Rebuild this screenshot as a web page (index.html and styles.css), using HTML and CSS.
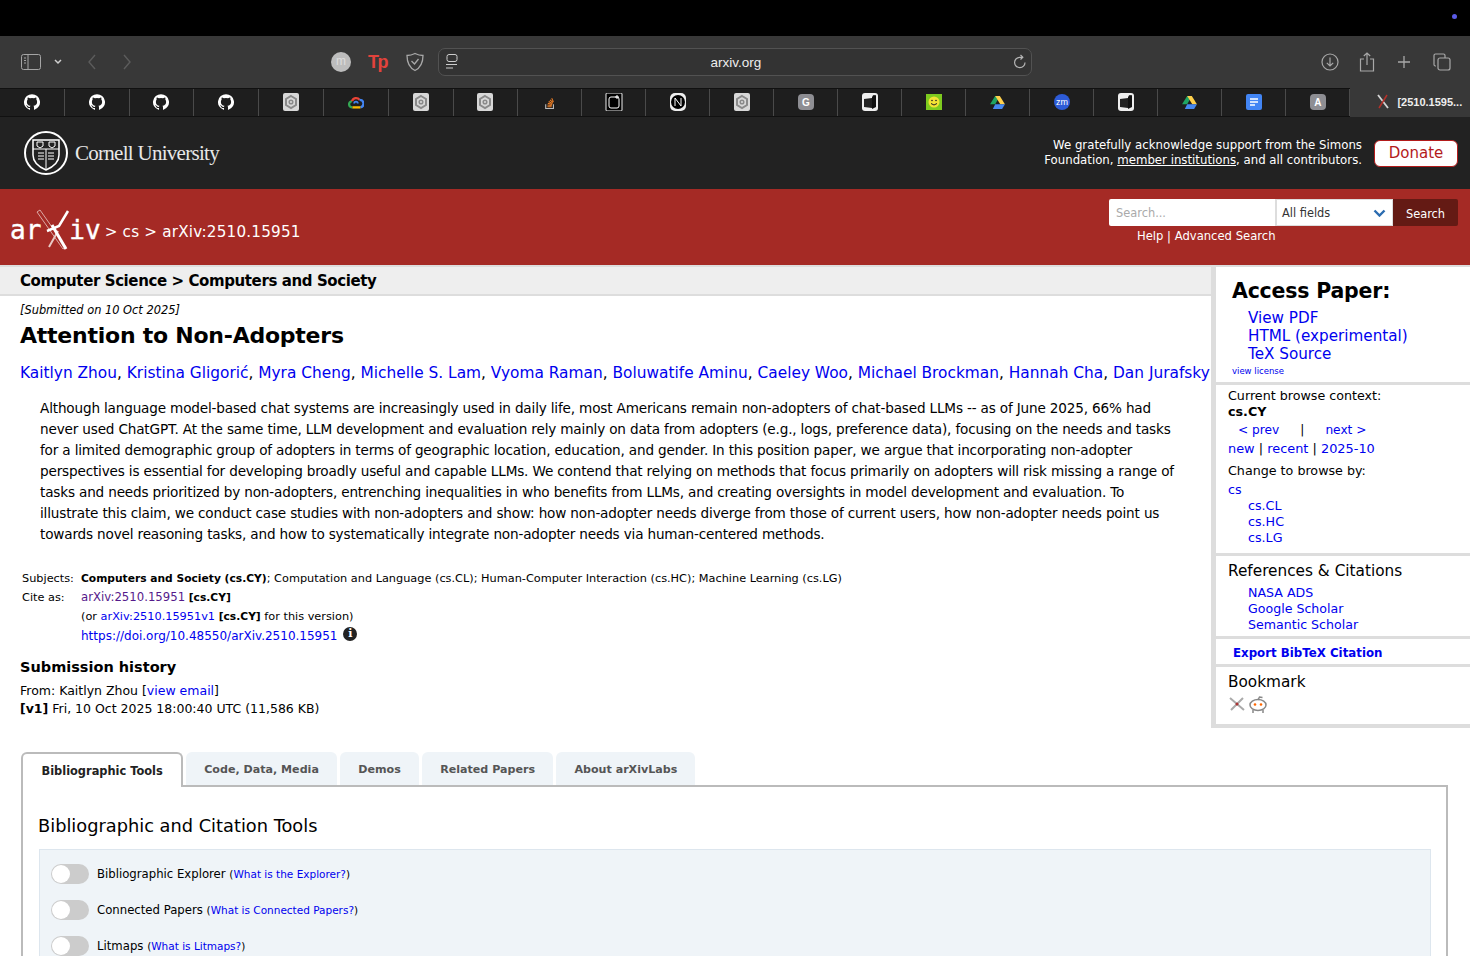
FILE: index.html

```html
<!DOCTYPE html>
<html lang="en">
<head>
  <meta charset="UTF-8" />
  <title>[2510.15951] Attention to Non-Adopters</title>
  <link rel="stylesheet" href="styles.css">
</head>
<body>
  <svg class="defs" width="0" height="0" aria-hidden="true">
    <symbol id="gh" viewBox="0 0 16 16"><path fill="#fff" d="M8 .2a8 8 0 0 0-2.500 15.600c.4.100.5-.2.5-.4v-1.400c-2.200.5-2.700-1-2.700-1-.4-.9-.9-1.200-.9-1.200-.7-.5.100-.5.100-.5.800.100 1.200.8 1.200.8.700 1.200 1.900.9 2.300.7.100-.5.300-.9.500-1.100-1.800-.2-3.600-.9-3.600-4 0-.9.300-1.600.8-2.100-.1-.2-.4-1 .1-2.100 0 0 .7-.2 2.200.8a7.500 7.500 0 0 1 4 0c1.500-1 2.200-.8 2.200-.8.400 1.100.2 1.900.1 2.100.5.600.8 1.300.8 2.100 0 3.100-1.900 3.800-3.700 4 .3.300.6.800.6 1.500v2.200c0 .2.100.5.500.4A8 8 0 0 0 8 .2z"/></symbol>
    <symbol id="hex" viewBox="0 0 18 18"><rect x="1" y="0" width="16" height="18" rx="2" fill="#d8d8d8"/><path d="M9 3l5 3v6l-5 3-5-3V6z" fill="none" stroke="#8a8a8a" stroke-width="2"/><circle cx="9" cy="9" r="1.800" fill="none" stroke="#8a8a8a" stroke-width="1.500"/></symbol>
    <symbol id="cloud" viewBox="0 0 18 14"><path d="M5 12.500a3.500 3.500 0 0 1-.5-7" fill="none" stroke="#34a853" stroke-width="2.600"/><path d="M4.500 5.500A4.800 4.800 0 0 1 13 4" fill="none" stroke="#ea4335" stroke-width="2.600"/><path d="M13 4a4.300 4.300 0 0 1 1 8.500" fill="none" stroke="#4285f4" stroke-width="2.600"/><path d="M5 12.500h9" stroke="#fbbc05" stroke-width="2.600"/><path d="M7 8a2 2 0 0 1 4 0" fill="none" stroke="#4285f4" stroke-width="2"/></symbol>
    <symbol id="so" viewBox="0 0 14 16"><path d="M2 10v5h9v-5" fill="none" stroke="#bcbbbb" stroke-width="1.300"/><path d="M4 13h5M4 11l5 .6M4.500 9l5 1.300M5.500 6.800l4.400 2.500M7 4.800l3.500 3.400M9 3l2 4.300" stroke="#f48024" stroke-width="1.200"/></symbol>
    <symbol id="box" viewBox="0 0 18 18"><rect x="1" y="0" width="16" height="18" rx="1" fill="#000" stroke="#eee"/><rect x="4" y="4" width="10" height="11" rx="2" fill="none" stroke="#fff"/><path d="M12 2v4M10 4h4" stroke="#fff"/></symbol>
    <symbol id="notion" viewBox="0 0 18 18"><rect x="1" y="0" width="16" height="18" rx="5" fill="#eee"/><circle cx="9" cy="9" r="7" fill="#000"/><path d="M6 13V5l6 8V5" fill="none" stroke="#fff"/></symbol>
    <symbol id="book" viewBox="0 0 18 18"><rect x="1" y="0" width="16" height="18" rx="3" fill="#eee"/><path d="M3 6l8-1v10l-8-1z" fill="#222"/><path d="M11 4l4-2v12l-4 2z" fill="#111"/><circle cx="13" cy="3.500" r="1.500" fill="#111"/></symbol>
    <symbol id="smile" viewBox="0 0 16 16"><rect width="16" height="16" fill="#7ecb1f"/><circle cx="8" cy="8" r="5.500" fill="#f2e335"/><circle cx="6" cy="6.500" r=".8" fill="#222"/><circle cx="10" cy="6.500" r=".8" fill="#222"/><path d="M5 9.500q3 3 6 0" fill="none" stroke="#222"/></symbol>
    <symbol id="drive" viewBox="0 0 16 14"><path d="M5.500 0h5l-5 9H0z" fill="#1fa463"/><path d="M5.500 0h5L16 9h-5z" fill="#ffd04b"/><path d="M3 14l2.500-5H16l-3 5z" fill="#4688f1"/></symbol>
    <symbol id="doc" viewBox="0 0 16 16"><rect width="16" height="16" rx="2" fill="#4285f4"/><path d="M4 5h8M4 8h8M4 11h5" stroke="#fff" stroke-width="1.500"/></symbol>
  </svg>

  <div class="mac-bar"><span class="mac-dot"></span></div>

  <div class="toolbar">
    <svg class="tb-sidebar" width="20" height="16" viewBox="0 0 20 16"><rect x=".5" y=".5" width="19" height="15" rx="2" fill="none" stroke="#a5a5a5"/><path d="M7 .5v15" stroke="#a5a5a5"/><path d="M3 4h2M3 6.500h2M3 9h2" stroke="#a5a5a5"/></svg>
    <svg class="tb-chev" width="8" height="6" viewBox="0 0 8 6"><path d="M1 1l3 3 3-3" fill="none" stroke="#d0d0d0" stroke-width="1.500"/></svg>
    <svg class="tb-back" width="10" height="16" viewBox="0 0 10 16"><path d="M8 1L2 8l6 7" fill="none" stroke="#5c5c5c" stroke-width="1.400"/></svg>
    <svg class="tb-fwd" width="10" height="16" viewBox="0 0 10 16"><path d="M2 1l6 7-6 7" fill="none" stroke="#5c5c5c" stroke-width="1.400"/></svg>
    <span class="tb-avatar">m</span>
    <span class="tb-tp">Tp</span>
    <svg class="tb-shield" width="20" height="20" viewBox="0 0 20 20"><path d="M10 1.500c3 1.500 5 2 8 2 0 7-2 12-8 15-6-3-8-8-8-15 3 0 5-.5 8-2z" fill="none" stroke="#a8a8a8" stroke-width="1.300"/><path d="M6.500 9l3 3 4-5" fill="none" stroke="#a8a8a8" stroke-width="1.300"/></svg>
    <div class="urlbar">
      <svg width="14" height="16" viewBox="0 0 14 16"><rect x="2" y=".5" width="10" height="7" rx="2" fill="none" stroke="#ccc"/><path d="M1 10.500h11M1 14h7" stroke="#ccc" stroke-width="1.200"/></svg>
      <span class="url-text">arxiv.org</span>
      <svg width="14" height="16" viewBox="0 0 14 16"><path d="M12 8.500A5.200 5.200 0 1 1 6.500 3.300H9" fill="none" stroke="#b5b5b5" stroke-width="1.200"/><path d="M7.500 1L9.800 3.300 7.500 5.500" fill="none" stroke="#b5b5b5" stroke-width="1.200"/></svg>
    </div>
    <div class="tb-right">
      <svg width="18" height="18" viewBox="0 0 18 18"><circle cx="9" cy="9" r="8" fill="none" stroke="#a8a8a8" stroke-width="1.200"/><path d="M9 4.500v8.500M5.800 9.800L9 13l3.200-3.200" fill="none" stroke="#a8a8a8" stroke-width="1.200"/></svg>
      <svg width="16" height="20" viewBox="0 0 16 20"><path d="M5 7H1.500v12h13V7H11" fill="none" stroke="#a8a8a8" stroke-width="1.200"/><path d="M8 13V1M4.800 4L8 1l3.200 3" fill="none" stroke="#a8a8a8" stroke-width="1.200"/></svg>
      <svg class="tb-wide" width="14" height="14" viewBox="0 0 14 14"><path d="M7 1v12M1 7h12" stroke="#a8a8a8" stroke-width="1.300"/></svg>
      <svg class="tb-wide" width="18" height="18" viewBox="0 0 18 18"><rect x="5" y="5" width="12" height="12" rx="2" fill="none" stroke="#a8a8a8" stroke-width="1.200"/><path d="M3 13H2.500A1.500 1.500 0 0 1 1 11.500v-9A1.500 1.500 0 0 1 2.500 1h8A1.500 1.500 0 0 1 12 2.500V5" fill="none" stroke="#a8a8a8" stroke-width="1.200"/></svg>
    </div>
  </div>

  <div class="tabstrip">
    <div class="tab"><svg width="16" height="16"><use href="#gh"/></svg></div>
    <div class="tab"><svg width="16" height="16"><use href="#gh"/></svg></div>
    <div class="tab"><svg width="16" height="16"><use href="#gh"/></svg></div>
    <div class="tab"><svg width="16" height="16"><use href="#gh"/></svg></div>
    <div class="tab"><svg width="18" height="18"><use href="#hex"/></svg></div>
    <div class="tab"><svg width="16" height="13"><use href="#cloud"/></svg></div>
    <div class="tab"><svg width="18" height="18"><use href="#hex"/></svg></div>
    <div class="tab"><svg width="18" height="18"><use href="#hex"/></svg></div>
    <div class="tab"><svg width="12" height="15"><use href="#so"/></svg></div>
    <div class="tab"><svg width="18" height="18"><use href="#box"/></svg></div>
    <div class="tab"><svg width="18" height="18"><use href="#notion"/></svg></div>
    <div class="tab"><svg width="18" height="18"><use href="#hex"/></svg></div>
    <div class="tab"><span class="fav fav-g">G</span></div>
    <div class="tab"><svg width="18" height="18"><use href="#book"/></svg></div>
    <div class="tab"><svg width="16" height="16"><use href="#smile"/></svg></div>
    <div class="tab"><svg width="15" height="13"><use href="#drive"/></svg></div>
    <div class="tab"><span class="fav fav-zm">zm</span></div>
    <div class="tab"><svg width="18" height="18"><use href="#book"/></svg></div>
    <div class="tab"><svg width="15" height="13"><use href="#drive"/></svg></div>
    <div class="tab"><svg width="16" height="16"><use href="#doc"/></svg></div>
    <div class="tab"><span class="fav fav-a">A</span></div>
    <div class="tab-active">
      <svg width="12" height="15" viewBox="0 0 12 15"><path d="M1 1l10 13" stroke="#d5d5d5" stroke-width="1.800"/><path d="M10 1L2 14" stroke="#b5312a" stroke-width="1.500"/></svg>
      <span>[2510.1595...</span>
    </div>
  </div>

  <div class="cornell">
    <div class="cornell-logo">
      <svg width="44" height="46" viewBox="0 0 44 46"><circle cx="22" cy="23" r="21" fill="none" stroke="#fff" stroke-width="2"/><path d="M9 10h26v15c0 8-6 12-13 15-7-3-13-7-13-15z" fill="none" stroke="#fff" stroke-width="1.500"/><path d="M9 19h26M22 19v20M14 23h6M14 26h6M14 29h6M24 23h6M24 26h6M24 29h6" stroke="#fff"/><path d="M13 12h6v4l-3 2-3-2zM25 12h6v4l-3 2-3-2z" fill="none" stroke="#fff"/></svg>
      <span>Cornell University</span>
    </div>
    <div class="cornell-right">
      <p class="support">We gratefully acknowledge support from the Simons<br>Foundation, <a href="#">member institutions</a>, and all contributors.</p>
      <a class="donate" href="#">Donate</a>
    </div>
  </div>

  <div class="redhead">
    <div class="crumbs">
      <span class="logo-text">ar</span>
      <svg class="logo-x" width="46" height="42" viewBox="0 0 46 42"><path d="M6 1l26 37-3 2L3 3z" fill="none" stroke="#e9c9c5" stroke-width=".8"/><path d="M13 22l12-5 9-15" fill="none" stroke="#fff" stroke-width="2.500"/><path d="M15 38l9-16" stroke="#e9c9c5" stroke-width="2"/><path d="M18 16l14 24" stroke="#fff" stroke-width="3"/></svg>
      <span class="logo-text logo-iv">iv</span>
      <span class="crumb-text">&gt; cs &gt; arXiv:2510.15951</span>
    </div>
    <div class="searchwrap">
      <div class="searchrow">
        <div class="search-input">Search...</div>
        <div class="search-select">All fields
          <svg width="13" height="8" viewBox="0 0 13 8"><path d="M1.500 1.500l5 5 5-5" fill="none" stroke="#2b6cb0" stroke-width="2.400"/></svg>
        </div>
        <div class="search-btn">Search</div>
      </div>
      <div class="search-links">Help | Advanced Search</div>
    </div>
  </div>

  <div class="main">
    <div class="content">
      <div class="subheader">Computer Science &gt; Computers and Society</div>
      <div class="dateline">[Submitted on 10 Oct 2025]</div>
      <h1 class="title">Attention to Non-Adopters</h1>
      <div class="authors"><a href="#">Kaitlyn Zhou</a>, <a href="#">Kristina Gligorić</a>, <a href="#">Myra Cheng</a>, <a href="#">Michelle S. Lam</a>, <a href="#">Vyoma Raman</a>, <a href="#">Boluwatife Aminu</a>, <a href="#">Caeley Woo</a>, <a href="#">Michael Brockman</a>, <a href="#">Hannah Cha</a>, <a href="#">Dan Jurafsky</a></div>
      <p class="abstract">Although language model-based chat systems are increasingly used in daily life, most Americans remain non-adopters of chat-based LLMs -- as of June 2025, 66% had<br>never used ChatGPT. At the same time, LLM development and evaluation rely mainly on data from adopters (e.g., logs, preference data), focusing on the needs and tasks<br>for a limited demographic group of adopters in terms of geographic location, education, and gender. In this position paper, we argue that incorporating non-adopter<br>perspectives is essential for developing broadly useful and capable LLMs. We contend that relying on methods that focus primarily on adopters will risk missing a range of<br>tasks and needs prioritized by non-adopters, entrenching inequalities in who benefits from LLMs, and creating oversights in model development and evaluation. To<br>illustrate this claim, we conduct case studies with non-adopters and show: how non-adopter needs diverge from those of current users, how non-adopter needs point us<br>towards novel reasoning tasks, and how to systematically integrate non-adopter needs via human-centered methods.</p>
      <div class="meta">
        <div class="meta-label">Subjects:</div>
        <div><b>Computers and Society (cs.CY)</b>; Computation and Language (cs.CL); Human-Computer Interaction (cs.HC); Machine Learning (cs.LG)</div>
        <div class="meta-label">Cite as:</div>
        <div><a class="visited" href="#">arXiv:2510.15951</a> <b>[cs.CY]</b></div>
        <div></div>
        <div>(or <a href="#">arXiv:2510.15951v1</a> <b>[cs.CY]</b> for this version)</div>
        <div></div>
        <div class="doi"><a href="#">https://doi.org/10.48550/arXiv.2510.15951</a> <span class="info">i</span></div>
      </div>
      <h2 class="history-head">Submission history</h2>
      <div class="history">From: Kaitlyn Zhou [<a href="#">view email</a>]<br><b>[v1]</b> Fri, 10 Oct 2025 18:00:40 UTC (11,586 KB)</div>
    </div>

    <div class="sidebar">
      <div class="side-sec side-access">
        <h2>Access Paper:</h2>
        <ul class="access-links">
          <li><a href="#">View PDF</a></li>
          <li><a href="#">HTML (experimental)</a></li>
          <li><a href="#">TeX Source</a></li>
        </ul>
        <a class="license" href="#">view license</a>
      </div>
      <div class="side-sec side-browse">
        <div>Current browse context:</div>
        <b>cs.CY</b>
        <div class="prevnext"><a href="#">&lt;&nbsp;prev</a><span>|</span><a href="#">next&nbsp;&gt;</a></div>
        <div class="newrecent"><a href="#">new</a> | <a href="#">recent</a> | <a href="#">2025-10</a></div>
        <div class="change">Change to browse by:</div>
        <div class="cat"><a href="#">cs</a></div>
        <div class="subcats"><a href="#">cs.CL</a><a href="#">cs.HC</a><a href="#">cs.LG</a></div>
      </div>
      <div class="side-sec side-refs">
        <h3>References &amp; Citations</h3>
        <div class="subcats"><a href="#">NASA ADS</a><a href="#">Google Scholar</a><a href="#">Semantic Scholar</a></div>
      </div>
      <div class="side-sec side-bibtex"><a href="#">Export BibTeX Citation</a></div>
      <div class="side-sec side-book">
        <h3>Bookmark</h3>
        <div class="book-icons">
          <svg width="18" height="16" viewBox="0 0 18 16"><path d="M2 2l14 12M15 2L3 14" stroke="#aaa" stroke-width="2"/><circle cx="9" cy="8" r="1.500" fill="#a33"/></svg>
          <svg width="20" height="18" viewBox="0 0 20 18"><ellipse cx="10" cy="9" rx="8" ry="5.500" fill="none" stroke="#888" stroke-width="1.500"/><circle cx="7" cy="8.500" r="1.300" fill="#f60"/><circle cx="13" cy="8.500" r="1.300" fill="#f60"/><path d="M10 4l1.500-3 3 .5M5 14v3M15 14v3" fill="none" stroke="#888" stroke-width="1.500"/></svg>
        </div>
      </div>
    </div>
  </div>

  <div class="labs">
    <div class="lab-tabs">
      <div class="lab-tab lab-tab-on">Bibliographic Tools</div>
      <div class="lab-tab">Code, Data, Media</div>
      <div class="lab-tab">Demos</div>
      <div class="lab-tab">Related Papers</div>
      <div class="lab-tab">About arXivLabs</div>
    </div>
    <div class="lab-panel">
      <h2>Bibliographic and Citation Tools</h2>
      <div class="lab-box">
        <div class="lab-row"><span class="switch"></span>Bibliographic Explorer <span class="what">(<a href="#">What is the Explorer?</a>)</span></div>
        <div class="lab-row"><span class="switch"></span>Connected Papers <span class="what">(<a href="#">What is Connected Papers?</a>)</span></div>
        <div class="lab-row"><span class="switch"></span>Litmaps <span class="what">(<a href="#">What is Litmaps?</a>)</span></div>
      </div>
    </div>
  </div>
</body>
</html>
```

FILE: styles.css

```css
html, body {
  height: 956px;
  overflow: hidden;
}
body {
  margin: 0;
  background: #fff;
  color: #000;
  font-family: "DejaVu Sans", sans-serif;
  font-size: 14px;
}
a {
  color: #0000ee;
  text-decoration: none;
}
.defs {
  display: block;
  height: 0;
}

/* browser chrome */
.mac-bar {
  height: 36px;
  background: #000;
  display: flex;
  justify-content: flex-end;
  align-items: center;
  padding-right: 13px;
  box-sizing: border-box;
}
.mac-dot {
  width: 5px;
  height: 5px;
  border-radius: 50%;
  background: #5a5ae6;
  margin-top: -4px;
}
.toolbar {
  height: 52px;
  background: #383838;
  display: flex;
  align-items: center;
  box-sizing: border-box;
  padding-left: 21px;
}
.tb-chev { margin-left: 13px; }
.tb-back { margin-left: 25px; }
.tb-fwd { margin-left: 25px; }
.tb-avatar {
  width: 20px;
  height: 20px;
  border-radius: 50%;
  background: #bdbdbd;
  color: #ddd;
  font: 12px "Liberation Sans", sans-serif;
  text-align: center;
  line-height: 19px;
  margin-left: 199px;
}
.tb-tp {
  color: #e2433c;
  font: bold 18px "Liberation Sans", sans-serif;
  letter-spacing: -1.5px;
  margin-left: 17px;
  width: 19px;
}
.tb-shield { margin-left: 18px; }
.urlbar {
  width: 594px;
  height: 28px;
  box-sizing: border-box;
  margin-left: 13px;
  border: 1px solid #525252;
  border-radius: 7px;
  background: #333;
  display: flex;
  align-items: center;
  justify-content: space-between;
  padding: 0 4px 0 6px;
}
.url-text {
  color: #eee;
  font: 13.5px "Liberation Sans", sans-serif;
}
.tb-right {
  margin-left: 289px;
  display: flex;
  align-items: center;
  gap: 20px;
}
.tb-wide { margin-left: 2px; }
.tabstrip {
  height: 29px;
  background: #1e1e1e;
  display: flex;
  border-top: 1px solid #111;
  border-bottom: 1px solid #111;
  box-sizing: border-box;
}
.tab {
  flex: 0 0 64px;
  box-sizing: border-box;
  border-right: 1px solid #4a4a4a;
  padding-bottom: 1px;
  display: flex;
  align-items: center;
  justify-content: center;
}
.tab:nth-child(-n+8) { flex-basis: 64.8px; }
.fav {
  width: 16px;
  height: 16px;
  border-radius: 4px;
  color: #fff;
  font: bold 10px "Liberation Sans", sans-serif;
  display: flex;
  align-items: center;
  justify-content: center;
}
.fav-g, .fav-a { background: #8e8e93; }
.fav-zm {
  background: #2d5bd7;
  border-radius: 50%;
  font-weight: normal;
  font-size: 9px;
}
.tab-active {
  flex: 1;
  background: #383838;
  display: flex;
  align-items: center;
  gap: 8px;
  padding: 0 0 2px 27px;
  color: #eee;
  font: bold 11px "Liberation Sans", sans-serif;
  margin: -1px 0;
}

/* cornell band */
.cornell {
  height: 72px;
  background: #222;
  display: flex;
  justify-content: space-between;
  align-items: center;
  padding: 0 12px 0 24px;
  box-sizing: border-box;
}
.cornell-logo {
  display: flex;
  align-items: center;
  gap: 7px;
  color: #e8e8e8;
  font: 21px "Liberation Serif", serif;
  letter-spacing: -.72px;
}
.cornell-right {
  display: flex;
  align-items: center;
  gap: 12px;
}
.support {
  margin: 0;
  color: #fff;
  font-size: 11.75px;
  line-height: 15px;
  text-align: right;
}
.support a {
  color: #fff;
  text-decoration: underline;
}
.donate {
  width: 84px;
  height: 27px;
  box-sizing: border-box;
  background: #fff;
  color: #b31b1b;
  border: 1px solid #b31b1b;
  border-radius: 6px;
  font-size: 15px;
  line-height: 25px;
  text-align: center;
}

/* red arxiv header */
.redhead {
  height: 76px;
  background: #a52a25;
  display: flex;
  justify-content: space-between;
  box-sizing: border-box;
  padding: 10px 12px 0 10px;
  color: #fff;
}
.crumbs {
  display: flex;
  align-items: center;
  height: 62px;
}
.logo-text {
  font: 26px "DejaVu Sans Mono", monospace;
  -webkit-text-stroke: .4px #fff;
}
.logo-x { margin: 0 -11px 0 -7px; }
.logo-iv { margin-right: 4px; }
.crumb-text {
  font-size: 15.2px;
  letter-spacing: .2px;
  padding-top: 3px;
}
.searchrow {
  display: flex;
  height: 27px;
  font-size: 11.4px;
}
.search-input {
  width: 166px;
  background: #fff;
  color: #aaa;
  line-height: 29px;
  padding-left: 7px;
  box-sizing: border-box;
  border-radius: 2px 0 0 2px;
}
.search-select {
  width: 118px;
  background: #fff;
  color: #333;
  border: 1px solid #ddd;
  border-left-width: 2px;
  box-sizing: border-box;
  padding: 0 6px 0 5px;
  display: flex;
  align-items: center;
  justify-content: space-between;
}
.search-btn {
  width: 65px;
  background: #641a14;
  text-align: center;
  line-height: 30px;
  border-radius: 0 2px 2px 0;
}
.search-links {
  font-size: 11.6px;
  margin-top: 3px;
  padding-left: 28px;
}

/* paper */
.main {
  display: flex;
  height: 461px;
  border-top: 2px solid #ddd;
  box-sizing: border-box;
}
.content {
  width: 1211px;
  flex: none;
}
.subheader {
  height: 29px;
  background: #eee;
  border-bottom: 2px solid #ddd;
  box-sizing: border-box;
  padding-left: 20px;
  font-size: 15px;
  letter-spacing: -.4px;
  font-weight: bold;
  line-height: 29px;
}
.dateline {
  font-size: 11.4px;
  font-style: italic;
  padding: 7px 0 0 20px;
  line-height: 14px;
}
.title {
  font-size: 22px;
  letter-spacing: -.24px;
  line-height: 30px;
  margin: 4px 0 0 20px;
}
.authors {
  font-size: 15.38px;
  line-height: 20px;
  white-space: nowrap;
  margin: 12px 0 0 20px;
}
.abstract {
  margin: 15px 0 0 40px;
  font-size: 13.6px;
  letter-spacing: -.17px;
  line-height: 21px;
  white-space: nowrap;
}
.meta {
  display: grid;
  grid-template-columns: 59px 1fr;
  grid-auto-rows: 19px;
  margin: 24px 0 0 22px;
  font-size: 11.3px;
  line-height: 19px;
}
.meta b { font-size: 10.7px; }
.meta .visited { font-size: 11.7px; }
.doi {
  font-size: 12px;
  line-height: 21px;
}
.info {
  display: inline-block;
  width: 14px;
  height: 14px;
  border-radius: 50%;
  background: #222;
  color: #fff;
  font: bold 11px/14px "DejaVu Serif", serif;
  text-align: center;
  vertical-align: 3px;
  margin-left: 2px;
}
.visited { color: #551a8b; }
.history-head {
  font-size: 14.5px;
  line-height: 20px;
  margin: 12px 0 0 20px;
}
.history {
  font-size: 12.5px;
  line-height: 18px;
  margin: 5px 0 0 20px;
}

/* sidebar */
.sidebar {
  flex: 1;
  border-left: 5px solid #ddd;
  height: 461px;
  box-sizing: border-box;
  border-bottom: 4px solid #ddd;
}
.side-sec {
  border-bottom: 3px solid #ddd;
  padding-left: 12px;
  box-sizing: border-box;
}
.side-sec:last-child { border-bottom: 0; }
.side-access {
  height: 118px;
  padding-left: 16px;
}
.side-access h2 {
  font-size: 20.5px;
  letter-spacing: -.2px;
  margin: 0;
  line-height: 28px;
  padding-top: 10px;
}
.access-links {
  list-style: none;
  margin: 4px 0 0 16px;
  padding: 0;
  font-size: 15.2px;
  line-height: 18px;
}
.license {
  font-size: 8.5px;
  display: block;
  line-height: 14px;
  margin-top: 1px;
}
.side-browse {
  height: 171px;
  font-size: 12.7px;
  line-height: 16px;
  padding-top: 3px;
}
.prevnext {
  display: flex;
  gap: 21px;
  padding-left: 10px;
  line-height: 20px;
  font-size: 12.2px;
}
.newrecent {
  margin-top: 1px;
  font-size: 12.9px;
}
.change { margin-top: 6px; }
.cat { margin-top: 3px; }
.subcats {
  display: flex;
  flex-direction: column;
  padding-left: 20px;
  line-height: 16px;
}
.side-refs {
  height: 83px;
  padding-top: 5px;
}
.side-sec h3 {
  font-size: 15.3px;
  font-weight: normal;
  margin: 0;
  line-height: 20px;
}
.side-refs .subcats {
  font-size: 12.6px;
  margin-top: 4px;
}
.side-bibtex {
  height: 28px;
  font-size: 11.8px;
  font-weight: bold;
  line-height: 29px;
  padding-left: 17px;
}
.side-book { padding-top: 5px; }
.book-icons {
  display: flex;
  gap: 2px;
  margin-top: 4px;
}

/* labs */
.labs {
  padding: 26px 22px 0 21px;
}
.lab-tabs {
  display: flex;
  gap: 3.4px;
  height: 33px;
  font-size: 11.1px;
  font-weight: bold;
  color: #555;
}
.lab-tab {
  background: #eff4f8;
  border-radius: 6px 6px 0 0;
  padding: 0 18px;
  line-height: 35px;
}
.lab-tab-on {
  background: #fff;
  color: #222;
  font-size: 11.4px;
  border: 2px solid #bbb;
  border-bottom: 0;
  padding: 0 18px 0 18.500px;
  position: relative;
  z-index: 1;
  height: 35px;
  box-sizing: border-box;
  line-height: 34px;
}
.lab-panel {
  border: 2px solid #bbb;
  border-bottom: 0;
  padding: 27px 15px 0;
  height: 200px;
  box-sizing: border-box;
}
.lab-panel h2 {
  font-size: 17.8px;
  font-weight: normal;
  line-height: 24px;
  margin: 0 0 11px;
}
.lab-box {
  background: #eff4f8;
  border: 1px solid #dde6ee;
  margin-left: 1px;
  padding: 6px 11px 0;
  font-size: 11.7px;
}
.lab-row {
  display: flex;
  align-items: center;
  height: 36px;
  white-space: pre;
}
.what { font-size: 10.5px; }
.switch {
  width: 38px;
  height: 20px;
  border-radius: 10px;
  background: #ccc;
  margin-right: 8px;
  display: flex;
  align-items: center;
  padding-left: 1px;
  box-sizing: border-box;
}
.switch::before {
  content: "";
  width: 18px;
  height: 18px;
  border-radius: 50%;
  background: #fff;
}
```
